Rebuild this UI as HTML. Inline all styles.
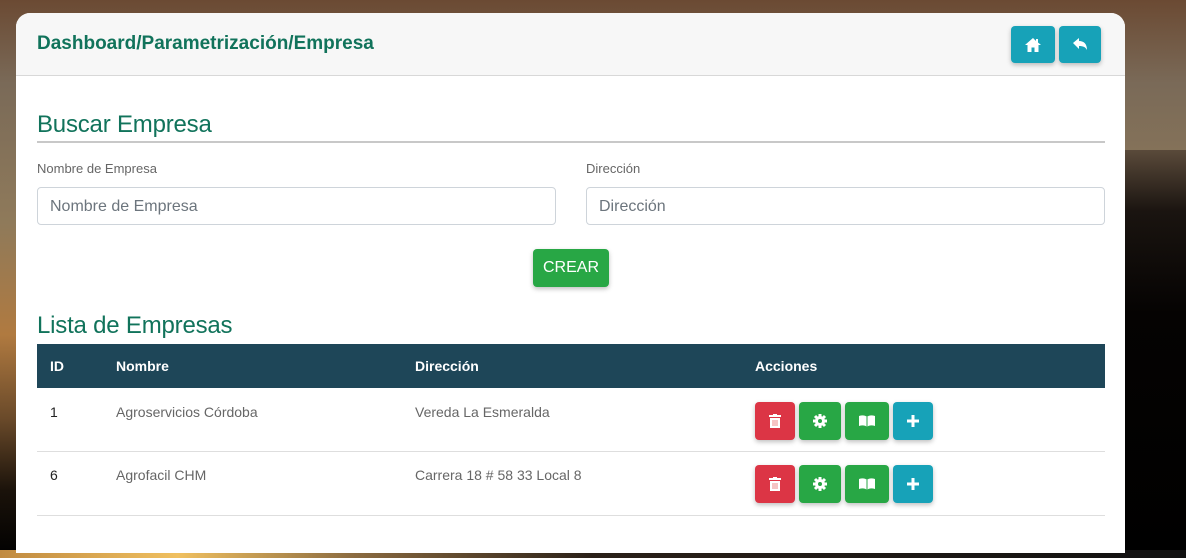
<!DOCTYPE html>
<html><head><meta charset="utf-8"><style>
*{box-sizing:border-box;margin:0;padding:0}
body{width:1186px;height:558px;overflow:hidden;position:relative;font-family:"Liberation Sans",sans-serif;
background:linear-gradient(180deg,#6b4a33 0%,#7a6a58 15%,#8f7a5a 40%,#b07a40 60%,#6a4a2a 75%,#1a120a 88%,#000 100%);}
.bgr{position:absolute;right:0;top:150px;width:61px;height:408px;background:linear-gradient(180deg,#5a4a3a,#1a1410 15%,#050302 40%,#000);}
.bgb{position:absolute;left:0;top:550px;width:1186px;height:8px;background:linear-gradient(90deg,#c08a40,#f0c060 15%,#8a6a40 30%,#2a2018 50%,#111)}
.card{position:absolute;left:16px;top:13px;width:1109px;height:540px;background:#fff;border-radius:14px 14px 0 0;overflow:hidden}
.hdr{position:absolute;left:0;top:0;width:100%;height:63px;background:#f7f7f7;border-bottom:1px solid #d8d8d8}
.t{position:absolute;white-space:nowrap}
.btn{position:absolute;border-radius:4px;box-shadow:0 2px 5px rgba(0,0,0,.25);display:flex;align-items:center;justify-content:center;color:#fff}
.info{background:#17a2b8}.red{background:#dc3545}.grn{background:#28a745}
.inp{position:absolute;height:38px;border:1px solid #ced4da;border-radius:4px;font-size:16px;color:#6c757d;padding:10px 12px}
.row{position:absolute;left:21px;width:1068px;border-bottom:1px solid #dedede}
</style></head><body>
<div class="bgr"></div>
<div class="bgb"></div>
<div class="card">
 <div class="hdr"></div>
 <div class="t" style="left:21px;top:20px;font-size:19px;font-weight:bold;color:#11735b">Dashboard/Parametrización/Empresa</div>
 <div class="btn info" style="left:995px;top:13px;width:44px;height:37px"><svg width="18" height="16" viewBox="0 0 18 16"><path d="M9 1L1 8h2.5v7h4v-4.5h3V15h4V8H17L14 5.5V2h-2v2L9 1z" fill="#fff"/></svg></div>
 <div class="btn info" style="left:1043px;top:13px;width:42px;height:37px"><svg width="16" height="16" viewBox="0 0 16 16"><path d="M1 6l6-5v3c5 0 8 3 8 9-1.5-3-4-4-8-4v3z" fill="#fff"/></svg></div>
 <div class="t" style="left:21px;top:98px;font-size:24px;color:#11735b;letter-spacing:-0.2px">Buscar Empresa</div>
 <div style="position:absolute;left:21px;top:128px;width:1068px;height:2px;background:#c8c8c8"></div>
 <div class="t" style="left:21px;top:148px;font-size:13px;color:#666">Nombre de Empresa</div>
 <div class="t" style="left:570px;top:148px;font-size:13px;color:#666">Dirección</div>
 <div class="inp" style="left:21px;top:174px;width:519px">Nombre de Empresa</div>
 <div class="inp" style="left:570px;top:174px;width:519px">Dirección</div>
 <div class="btn grn" style="left:517px;top:236px;width:76px;height:38px;font-size:16px">CREAR</div>
 <div class="t" style="left:21px;top:299px;font-size:24px;color:#11735b;letter-spacing:-0.2px">Lista de Empresas</div>
 <div style="position:absolute;left:21px;top:331px;width:1068px;height:44px;background:#1e4658;color:#fff;font-size:14px;font-weight:bold">
  <span class="t" style="left:13px;top:14px">ID</span><span class="t" style="left:79px;top:14px">Nombre</span><span class="t" style="left:378px;top:14px">Dirección</span><span class="t" style="left:718px;top:14px">Acciones</span>
 </div>
 <div class="row" style="top:375px;height:64px"></div>
 <div class="row" style="top:439px;height:64px"></div>
 <div class="t" style="left:34px;top:391px;font-size:14px;color:#222">1</div>
 <div class="t" style="left:100px;top:391px;font-size:14px;color:#666">Agroservicios Córdoba</div>
 <div class="t" style="left:399px;top:391px;font-size:14px;color:#666">Vereda La Esmeralda</div>
 <div class="t" style="left:34px;top:454px;font-size:14px;color:#222">6</div>
 <div class="t" style="left:100px;top:454px;font-size:14px;color:#666">Agrofacil CHM</div>
 <div class="t" style="left:399px;top:454px;font-size:14px;color:#666">Carrera 18 # 58 33 Local 8</div>
</div>
<div style="position:absolute;left:0;top:0">
 <div class="btn red" style="left:755px;top:402px;width:40px;height:38px"><svg width="14" height="16" viewBox="0 0 14 16"><path d="M1 2h4V1h4v1h4v2H1zM2 5h10v10H2z" fill="#fff"/><path d="M5 7v6M7 7v6M9 7v6" stroke="#e88" stroke-width="1"/></svg></div>
 <div class="btn grn" style="left:799px;top:402px;width:42px;height:38px"><svg width="16" height="16" viewBox="0 0 16 16"><circle cx="8" cy="8" r="5" fill="#fff"/><path d="M8 1v14M1 8h14M3 3l10 10M13 3L3 13" stroke="#fff" stroke-width="3"/><circle cx="8" cy="8" r="2" fill="#28a745"/></svg></div>
 <div class="btn grn" style="left:845px;top:402px;width:44px;height:38px"><svg width="18" height="14" viewBox="0 0 18 14"><path d="M1 2c3-1 6-1 8 1 2-2 5-2 8-1v10c-3-1-6-1-8 1-2-2-5-2-8-1z" fill="#fff"/><path d="M9 3v10" stroke="#28a745" stroke-width="1"/></svg></div>
 <div class="btn info" style="left:893px;top:402px;width:40px;height:38px"><svg width="14" height="14" viewBox="0 0 14 14"><path d="M7 1v12M1 7h12" stroke="#fff" stroke-width="3"/></svg></div>
 <div class="btn red" style="left:755px;top:465px;width:40px;height:38px"><svg width="14" height="16" viewBox="0 0 14 16"><path d="M1 2h4V1h4v1h4v2H1zM2 5h10v10H2z" fill="#fff"/><path d="M5 7v6M7 7v6M9 7v6" stroke="#e88" stroke-width="1"/></svg></div>
 <div class="btn grn" style="left:799px;top:465px;width:42px;height:38px"><svg width="16" height="16" viewBox="0 0 16 16"><circle cx="8" cy="8" r="5" fill="#fff"/><path d="M8 1v14M1 8h14M3 3l10 10M13 3L3 13" stroke="#fff" stroke-width="3"/><circle cx="8" cy="8" r="2" fill="#28a745"/></svg></div>
 <div class="btn grn" style="left:845px;top:465px;width:44px;height:38px"><svg width="18" height="14" viewBox="0 0 18 14"><path d="M1 2c3-1 6-1 8 1 2-2 5-2 8-1v10c-3-1-6-1-8 1-2-2-5-2-8-1z" fill="#fff"/><path d="M9 3v10" stroke="#28a745" stroke-width="1"/></svg></div>
 <div class="btn info" style="left:893px;top:465px;width:40px;height:38px"><svg width="14" height="14" viewBox="0 0 14 14"><path d="M7 1v12M1 7h12" stroke="#fff" stroke-width="3"/></svg></div>
</div>
</body></html>
